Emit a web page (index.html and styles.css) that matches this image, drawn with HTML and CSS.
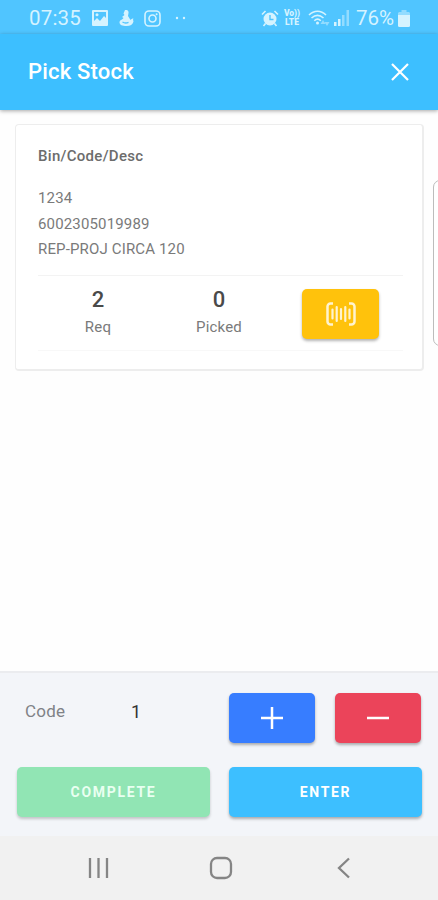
FILE: index.html
```
<!doctype html>
<html lang="en">
<head>
	<meta charset="UTF-8">
	<meta name="viewport" content="width=device-width, initial-scale=1">
	<title>Pick Stock</title>
	<link rel="stylesheet" href="styles.css">
</head>
<body>
	<div class="status">
		<div class="status_left">
			<span class="time">07:35</span>
			<svg class="ic_photo" width="16" height="16" viewBox="0 0 16 16">
				<path fill-rule="evenodd" d="M1 0h14a1 1 0 0 1 1 1v14a1 1 0 0 1-1 1H1a1 1 0 0 1-1-1V1a1 1 0 0 1 1-1zM2 2v9l3-3 3 3 4-5 2 2V2z"/>
				<circle cx="5" cy="4.8" r="1.5"/>
			</svg>
			<svg class="ic_app" width="15" height="16" viewBox="0 0 15 16">
				<path d="M6 0c2-.5 4 1 3.500 3L9 6l2.500 4c1-1 1.500-1.500 3-1.500-.8 1-.2 2 0 3-.8 3-3 4.500-7 4.500-4 0-7-1-7-3.500C.5 10 3 10 4.500 8L3 7l2.500-2L4.500 3.500z"/>
				<path class="cut" d="M3.500 12c2 1.200 4 1.200 6 .3"/>
			</svg>
			<svg class="ic_insta" width="17" height="17" viewBox="0 0 17 17">
				<rect class="line" x="1" y="1" width="15" height="15" rx="4"/>
				<circle class="line" cx="8.500" cy="8.500" r="3.500"/>
				<circle cx="12.600" cy="4.300" r="1"/>
			</svg>
			<svg class="ic_more" width="12" height="4" viewBox="0 0 12 4">
				<circle cx="2" cy="2" r="1.200"/>
				<circle cx="9" cy="2" r="1.200"/>
			</svg>
		</div>
		<div class="status_right">
			<svg class="ic_alarm" width="18" height="17" viewBox="0 0 18 17">
				<circle cx="9" cy="9" r="6.500"/>
				<path class="line" d="M1 4.500L4.500 1M17 4.500L13.500 1M4.500 13.500L2.500 16M13.500 13.500l2 2.500"/>
				<path class="cut" d="M9 5v4.500h3.500"/>
			</svg>
			<span class="volte"><span>Vo))</span><span>LTE</span></span>
			<svg class="ic_wifi" width="22" height="17" viewBox="0 0 22 17">
				<path class="line" d="M1 5c5-5 12-5 17 0M3.500 8c4-3.500 8-3.500 12 0M6.300 10.800c2-2 4.500-2 6.500 0"/>
				<circle cx="9.500" cy="13" r="1.500"/>
				<path class="dim" d="M15 10l-2.500 4h5zM19 16l-2.500-4h5z"/>
			</svg>
			<svg class="ic_signal" width="15" height="16" viewBox="0 0 15 16">
				<path d="M0 12h2.500v4H0zM4 9h2.500v7H4z"/>
				<path class="dim" d="M8 5h2.500v11H8zM12.500 0H15v16h-2.500z"/>
			</svg>
			<span class="percent">76%</span>
			<svg class="ic_battery" width="12" height="17" viewBox="0 0 12 17">
				<path class="dim" d="M3.500 0h5v2H11l1 1v3H0V3l1-1h2.500z"/>
				<path d="M0 5h12v10.500a1.500 1.500 0 0 1-1.500 1.500h-9A1.500 1.500 0 0 1 0 15.500z"/>
			</svg>
		</div>
	</div>

	<header class="header">
		<h1>Pick Stock</h1>
		<svg width="18" height="18" viewBox="0 0 18 18">
			<path d="M1 1l16 16M17 1L1 17"/>
		</svg>
	</header>

	<main class="content">
		<section class="card">
			<h2>Bin/Code/Desc</h2>
			<p>1234</p>
			<p>6002305019989</p>
			<p>REP-PROJ CIRCA 120</p>
			<div class="counts">
				<div class="count">
					<strong>2</strong>
					<span>Req</span>
				</div>
				<div class="count">
					<strong>0</strong>
					<span>Picked</span>
				</div>
				<button class="btn btn_scan" aria-label="Scan">
					<svg width="30" height="24" viewBox="0 0 30 24">
						<path class="bracket" d="M7 1.500H4.500a3 3 0 0 0-3 3v15a3 3 0 0 0 3 3H7M23 1.500h2.500a3 3 0 0 1 3 3v15a3 3 0 0 1-3 3H23"/>
						<path class="bars" d="M6.500 7.500v9M10.700 5v14M15 7v10M19.300 5v14M23.500 7.500v9"/>
					</svg>
				</button>
			</div>
		</section>
	</main>

	<footer class="footer">
		<div class="row">
			<label>Code</label>
			<span class="qty">1</span>
			<button class="btn btn_plus" aria-label="Add">
				<svg width="22" height="22" viewBox="0 0 22 22"><path d="M0 11h22M11 0v22"/></svg>
			</button>
			<button class="btn btn_minus" aria-label="Remove">
				<svg width="22" height="22" viewBox="0 0 22 22"><path d="M0 11h22"/></svg>
			</button>
		</div>
		<div class="row">
			<button class="btn btn_complete">COMPLETE</button>
			<button class="btn btn_enter">ENTER</button>
		</div>
	</footer>

	<nav class="nav">
		<svg width="22" height="22" viewBox="0 0 22 22"><path d="M3 1v20M11.500 1v20M20 1v20"/></svg>
		<svg width="24" height="24" viewBox="0 0 24 24"><rect x="2" y="2" width="20" height="20" rx="6"/></svg>
		<svg width="22" height="22" viewBox="0 0 22 22"><path d="M16 1.500L6 11l10 9.500"/></svg>
	</nav>

	<!-- edge panel handle -->
	<div class="edge"></div>
</body>
</html>
```
FILE: styles.css
```
*{box-sizing:border-box}
body{
	margin:0;
	height:900px;
	display:flex;
	flex-direction:column;
	position:relative;
	overflow:hidden;
	background:#fefefe;
	font-family:Roboto,"Liberation Sans",sans-serif;
	color:#7a7a7a;
}
svg{display:block;flex:none}
h1,h2,p{margin:0}

/* status bar */
.status{
	height:34px;
	padding:2px 28px 0 29px;
	display:flex;
	justify-content:space-between;
	background:#50c5ff;
	color:#d5f3ff;
}
.status_left,.status_right{display:flex;align-items:center}
.status svg{fill:#d5f3ff}
.status .line{fill:none;stroke:#d5f3ff;stroke-width:1.6}
.status .cut{fill:none;stroke:#50c5ff;stroke-width:1.4}
.status .dim{opacity:.5}
.time{font-size:20.5px;letter-spacing:.2px}
.ic_photo{margin-left:11px}
.ic_app{margin-left:11px}
.ic_insta{margin-left:10px}
.ic_more{margin-left:14px}
.volte{
	width:18px;
	margin-left:4px;
	font-size:8.5px;
	font-weight:900;
	line-height:9px;
	text-align:center;
}
.volte span{display:block}
.ic_wifi{margin-left:7px}
.ic_signal{margin-left:4px}
.percent{width:40px;margin-left:7px;font-size:20.5px}
.ic_battery{margin-left:2px}

.header{
	height:76px;
	padding:0 29px 0 28px;
	display:flex;
	align-items:center;
	justify-content:space-between;
	background:#3dbfff;
	box-shadow:0 1px 4px rgba(0,0,0,.35);
	color:#fff;
	position:relative;
}
.header h1{
	font-size:22px;
	font-weight:500;
	line-height:28px;
	letter-spacing:.2px;
}
.header svg{fill:none;stroke:#fff;stroke-width:2.2}

.content{flex:1;padding:14px 14px 0 15px}
.card{
	height:247px;
	padding:20px 19px 0 22px;
	border:1px solid #ededed;
	border-width:1px 2px 2px 1px;
	border-radius:4px;
	background:#fff;
}
.card h2{
	margin-bottom:19px;
	font-size:15px;
	font-weight:500;
	line-height:22px;
	letter-spacing:.3px;
	color:#6c6c6c;
}
.card p{font-size:15px;line-height:25.7px;letter-spacing:.15px}
.counts{
	height:76px;
	margin-top:12px;
	display:grid;
	grid-template-columns:120px 122px 1fr;
	border-top:1px solid #f3f3f3;
	border-bottom:1px solid #f8f8f8;
}
.count{padding-top:11px;text-align:center}
.count strong{
	display:block;
	font-size:22px;
	font-weight:500;
	line-height:26px;
	color:#4a4a4a;
}
.count span{
	display:block;
	font-size:15px;
	line-height:28px;
	letter-spacing:.2px;
}

/* buttons */
.btn{
	height:50px;
	padding:0;
	border:0;
	border-radius:5px;
	display:flex;
	align-items:center;
	justify-content:center;
	font:700 14px Roboto,"Liberation Sans",sans-serif;
	letter-spacing:1.7px;
	color:#fff;
	box-shadow:0 2px 3px rgba(0,0,0,.3);
}
.btn svg{fill:none;stroke:#fff;stroke-width:2.5}
.btn_scan{width:77px;margin:13px 0 0 22px;background:#ffc20c}
.btn_scan svg{stroke:#fff3d0}
.btn_scan .bars{stroke-width:2.2;stroke-linecap:round}
.btn_plus,.btn_minus{width:86px}
.btn_plus{background:#377dff}
.btn_minus{margin-left:20px;background:#eb445a}
.btn_complete{
	width:193px;
	background:#91e5b4;
	color:#e9fff1;
	box-shadow:0 2px 3px rgba(0,0,0,.2);
}
.btn_enter{width:193px;margin-left:19px;background:#3dbfff}

.footer{
	height:165px;
	padding:20px 16px 0 17px;
	background:#f3f5f9;
	border-top:2px solid #ebecef;
}
.row{display:flex;margin-bottom:24px}
.row label{
	width:114px;
	padding-left:8px;
	font-size:17px;
	line-height:36px;
	letter-spacing:.2px;
	color:#808287;
}
.qty{width:98px;font-size:18px;line-height:37px;color:#333}

/* android navigation */
.nav{
	height:64px;
	padding:0 83px 0 87px;
	display:flex;
	align-items:center;
	justify-content:space-between;
	background:#f1f1f1;
}
.nav svg{fill:none;stroke:#858585;stroke-width:2.3}

.edge{
	position:absolute;
	top:180px;
	right:-10px;
	width:15px;
	height:166px;
	border:1px solid #bcbcbc;
	border-radius:7px;
	background:#fff;
}
```
